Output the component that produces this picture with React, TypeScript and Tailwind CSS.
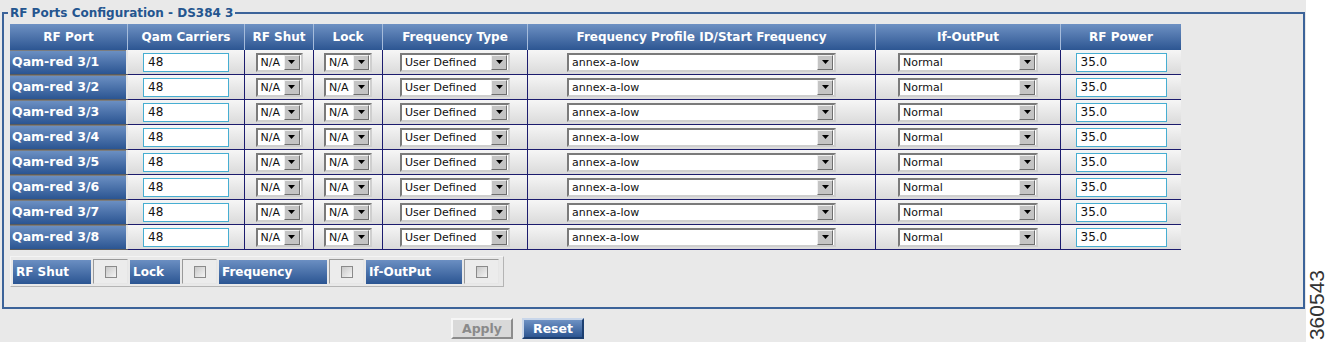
const FONT = "font-['DejaVu_Sans',Verdana,sans-serif]";
const COLS = 'grid grid-cols-[118px_117px_69px_69px_145px_348px_185px_120px]';

const HEADERS = [
  'RF Port',
  'Qam Carriers',
  'RF Shut',
  'Lock',
  'Frequency Type',
  'Frequency Profile ID/Start Frequency',
  'If-OutPut',
  'RF Power',
];

const PORTS = ['3/1', '3/2', '3/3', '3/4', '3/5', '3/6', '3/7', '3/8'];

const Arrow = () => (
  <div className="flex h-[15px] w-[16px] items-center justify-center border border-t-[#f0f0f0] border-l-[#f0f0f0] border-r-[#6e6e6e] border-b-[#6e6e6e] bg-[#c4c4c4]">
    <svg width="7" height="4" viewBox="0 0 7 4">
      <path d="M0 0h7L3.5 4z" fill="#000" />
    </svg>
  </div>
);

const Select = ({ value, width }: { value: string; width: string }) => (
  <div
    className={`flex h-[19px] ${width} items-center justify-between border-2 border-t-[#7a7a7a] border-l-[#7a7a7a] border-r-[#cfcfcf] border-b-[#cfcfcf] bg-white pr-[1px] pl-[3px]`}
  >
    <span className="pt-[1px] text-[11px] leading-[14px] text-[#111]">{value}</span>
    <Arrow />
  </div>
);

const TextBox = ({ value, width }: { value: string; width: string }) => (
  <div
    className={`flex h-[19px] ${width} items-center border border-[#46aed2] bg-white pl-[4px] text-[12px] leading-[15px] text-[#111]`}
  >
    {value}
  </div>
);

const Cell = ({ children, last }: { children: React.ReactNode; last?: boolean }) => (
  <div
    className={`flex items-center justify-center border-b border-[#1c1c6e] bg-gradient-to-b from-[#f6f6f6] to-[#dadada] ${
      last ? '' : 'border-r'
    }`}
  >
    {children}
  </div>
);

const Checkbox = () => (
  <div className="h-[12px] w-[12px] border border-[#8a8a8a] bg-gradient-to-br from-[#c8c8c8] to-[#f4f4f4]" />
);

const BlueLabel = ({ text, width }: { text: string; width: string }) => (
  <div
    className={`flex h-[24px] ${width} items-center bg-gradient-to-b from-[#6b8fc2] to-[#2b5592] pl-[3px] text-[12px] font-bold text-white`}
  >
    {text}
  </div>
);

const CheckCell = () => (
  <div className="flex h-[25px] w-[35px] items-center justify-center border border-t-[#9a9a9a] border-l-[#9a9a9a] border-r-[#e6e6e6] border-b-[#e6e6e6] bg-[#ececec]">
    <Checkbox />
  </div>
);

export default function App() {
  return (
    <div className={`flex h-[342px] w-[1328px] overflow-hidden bg-white ${FONT}`}>
      <div className="flex h-full w-[1306px] flex-col bg-[#e9e9e9]">
        <fieldset className="mt-[6px] ml-[2px] w-[1303px] border-2 border-[#3c6399] pt-[4px] pr-0 pb-[20px] pl-[6px]">
          <legend className="-ml-[2px] px-[2px] text-[12px] leading-[14px] font-bold text-[#24558f]">
            RF Ports Configuration - DS384 3
          </legend>

          <div className={`${COLS} h-[26px] w-[1171px]`}>
            {HEADERS.map((h, i) => (
              <div
                key={h}
                className={`flex items-center justify-center bg-gradient-to-b from-[#6e91c3] to-[#2d5692] text-[12px] font-bold text-white ${
                  i < HEADERS.length - 1 ? 'border-r border-[#a6bcdb]' : ''
                }`}
              >
                {h}
              </div>
            ))}
          </div>

          {PORTS.map(p => (
            <div key={p} className={`${COLS} h-[25px] w-[1171px]`}>
              <div className="flex items-stretch border-b border-[#5c5c5c] bg-[#e6e6e6] pr-[2px]">
                <div className="flex flex-1 items-center border-t border-[#7c7c7c] bg-gradient-to-b from-[#6b8fc2] to-[#2b5592] pl-[2px] text-[12.5px] font-bold text-white">
                  Qam-red {p}
                </div>
              </div>
              <Cell>
                <TextBox value="48" width="w-[86px]" />
              </Cell>
              <Cell>
                <Select value="N/A" width="w-[47px]" />
              </Cell>
              <Cell>
                <Select value="N/A" width="w-[48px]" />
              </Cell>
              <Cell>
                <Select value="User Defined" width="w-[110px]" />
              </Cell>
              <Cell>
                <Select value="annex-a-low" width="w-[269px]" />
              </Cell>
              <Cell>
                <Select value="Normal" width="w-[140px]" />
              </Cell>
              <Cell last>
                <TextBox value="35.0" width="w-[91px]" />
              </Cell>
            </div>
          ))}

          <div className="mt-[6px] flex w-[494px] items-center gap-[2px] border border-t-[#f4f4f4] border-l-[#f4f4f4] border-r-[#b4b4b4] border-b-[#b4b4b4] px-[2px] py-[2px]">
            <BlueLabel text="RF Shut" width="w-[78px]" />
            <CheckCell />
            <BlueLabel text="Lock" width="w-[50px]" />
            <CheckCell />
            <BlueLabel text="Frequency" width="w-[108px]" />
            <CheckCell />
            <BlueLabel text="If-OutPut" width="w-[96px]" />
            <CheckCell />
          </div>
        </fieldset>

        <div className="mt-[9px] flex gap-[9px] pl-[451px]">
          <button className="h-[21px] w-[62px] border-2 border-t-[#f6f6f6] border-l-[#f6f6f6] border-r-[#8c8c8c] border-b-[#8c8c8c] bg-[#d9d9d9] text-[12.5px] font-bold text-[#8a8a8a]">
            Apply
          </button>
          <button className="h-[21px] w-[62px] border-2 border-t-[#c8d6ea] border-l-[#c8d6ea] border-r-[#1d3f70] border-b-[#1d3f70] bg-gradient-to-b from-[#6e91c3] to-[#2d5692] text-[12.5px] font-bold text-white">
            Reset
          </button>
        </div>
      </div>

      <div className="flex flex-1 flex-col items-center justify-end pb-[2px]">
        <div className="rotate-180 font-['Liberation_Sans',Arial,sans-serif] text-[21px] leading-[22px] text-[#333] [writing-mode:vertical-rl]">
          360543
        </div>
      </div>
    </div>
  );
}
